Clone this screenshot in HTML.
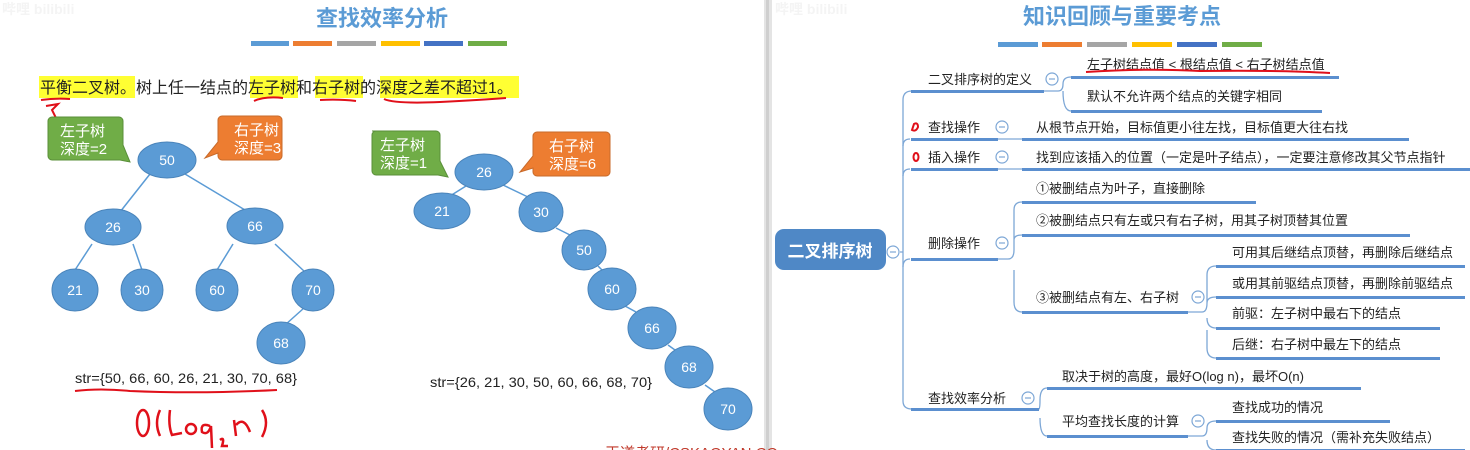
<!DOCTYPE html>
<html><head><meta charset="utf-8"><style>
html,body{margin:0;padding:0;background:#fff;width:1470px;height:450px;overflow:hidden}
svg{display:block;font-family:"Liberation Sans","Noto Sans CJK SC",sans-serif}
</style></head><body>
<svg width="1470" height="450" viewBox="0 0 1470 450" xmlns="http://www.w3.org/2000/svg">
<rect width="1470" height="450" fill="#fff"/>
<rect x="764" y="0" width="8" height="450" fill="#e4e4e4"/>
<rect x="766" y="0" width="3" height="450" fill="#cfcfcf"/>
<text x="2" y="14" font-size="14" fill="#f4f4f4" font-weight="bold">哔哩 bilibili</text>
<text x="775" y="14" font-size="14" fill="#f4f4f4" font-weight="bold">哔哩 bilibili</text>

<text x="382" y="26" font-size="22" font-weight="bold" fill="#5b9bd5" text-anchor="middle">查找效率分析</text>
<g>
<rect x="251" y="41" width="38" height="5" fill="#5b9bd5"/>
<rect x="293" y="41" width="39" height="5" fill="#ed7d31"/>
<rect x="337" y="41" width="39" height="5" fill="#a5a5a5"/>
<rect x="381" y="41" width="39" height="5" fill="#ffc000"/>
<rect x="424" y="41" width="39" height="5" fill="#4472c4"/>
<rect x="468" y="41" width="39" height="5" fill="#70ad47"/>
</g>
<rect x="39" y="76" width="96" height="22" fill="#ffff33"/>
<rect x="250" y="76" width="48" height="22" fill="#ffff33"/>
<rect x="315" y="76" width="48" height="22" fill="#ffff33"/>
<rect x="380" y="76" width="139" height="22" fill="#ffff33"/>
<text x="40" y="93" font-size="16" fill="#222">平衡二叉树。树上任一结点的左子树和右子树的深度之差不超过1。</text>
<g stroke="#e0101a" stroke-width="2" fill="none">
<path d="M41 100 Q55 98 70 99"/>
<path d="M46 106 L58 104 L52 110 L56 118"/>
<path d="M254 101 Q265 96 283 98"/>
<path d="M320 100 Q340 99 356 101"/>
<path d="M384 99 Q395 104 440 102 Q480 100 506 98"/>
<path d="M75 391 Q100 388 130 391 Q200 394 277 390"/>
</g>
<g stroke="#e0101a" stroke-width="2.5" fill="none">
<ellipse cx="143" cy="423" rx="6" ry="13"/>
<path d="M160 410 Q154 423 160 436"/>
<path d="M170 410 Q168 425 172 435 L182 433"/>
<circle cx="191" cy="429" r="5"/>
<path d="M210 426 Q200 422 202 432 Q208 436 211 426 L212 448"/>
<path d="M220 440 Q225 436 222 446 L228 446"/>
<path d="M234 420 L236 436 M236 425 Q244 416 250 432"/>
<path d="M262 410 Q270 422 262 437"/>
</g>

<g font-size="15" fill="#fff">
<path d="M52 117 h67 a4 4 0 0 1 4 4 v24 l7 17 l-10 -2 h-68 a4 4 0 0 1 -4 -4 v-35 a4 4 0 0 1 4 -4z" fill="#70ad47" stroke="#5a8f3a"/>
<text x="60" y="136">左子树</text><text x="60" y="154">深度=2</text>
<path d="M222 116 h56 a4 4 0 0 1 4 4 v36 a4 4 0 0 1 -4 4 h-56 a4 4 0 0 1 -4 -4 v-3 l-13 5 l13 -16 v-22 a4 4 0 0 1 4 -4z" fill="#ed7d31" stroke="#c86a2a"/>
<text x="234" y="135">右子树</text><text x="234" y="153">深度=3</text>
<path d="M372 131 h64 a4 4 0 0 1 4 4 v26 l8 16 l-10 -2 h-62 a4 4 0 0 1 -4 -4 v-36 a4 4 0 0 1 4 -4z" fill="#70ad47" stroke="#5a8f3a"/>
<text x="380" y="150">左子树</text><text x="380" y="168">深度=1</text>
<path d="M537 132 h69 a4 4 0 0 1 4 4 v36 a4 4 0 0 1 -4 4 h-69 a4 4 0 0 1 -4 -4 v-4 l-13 4 l13 -16 v-20 a4 4 0 0 1 4 -4z" fill="#ed7d31" stroke="#c86a2a"/>
<text x="549" y="151">右子树</text><text x="549" y="169">深度=6</text>
</g>

<g stroke="#5b9bd5" stroke-width="1.5">
<line x1="150" y1="174" x2="120" y2="212"/><line x1="185" y1="174" x2="245" y2="210"/>
<line x1="92" y1="244" x2="75" y2="270"/><line x1="133" y1="244" x2="142" y2="270"/>
<line x1="233" y1="244" x2="217" y2="270"/><line x1="275" y1="244" x2="305" y2="272"/>
<line x1="304" y1="308" x2="285" y2="325"/>
<line x1="466" y1="186" x2="450" y2="196"/><line x1="503" y1="185" x2="530" y2="198"/>
<line x1="556" y1="228" x2="572" y2="236"/><line x1="598" y1="266" x2="604" y2="272"/>
<line x1="625" y1="306" x2="636" y2="312"/><line x1="668" y1="345" x2="675" y2="350"/>
<line x1="705" y1="385" x2="715" y2="392"/>
</g>
<g fill="#5b9bd5" stroke="#4a84ba" stroke-width="1">
<ellipse cx="167" cy="160" rx="29" ry="18"/>
<ellipse cx="113" cy="227" rx="28" ry="18"/>
<ellipse cx="255" cy="226" rx="28" ry="18"/>
<ellipse cx="75" cy="290" rx="23" ry="21"/>
<ellipse cx="142" cy="290" rx="21" ry="21"/>
<ellipse cx="217" cy="290" rx="21" ry="21"/>
<ellipse cx="313" cy="290" rx="21" ry="21"/>
<ellipse cx="281" cy="343" rx="24" ry="21"/>
<ellipse cx="484" cy="172" rx="29" ry="18"/>
<ellipse cx="442" cy="211" rx="28" ry="18"/>
<ellipse cx="541" cy="212" rx="22" ry="20"/>
<ellipse cx="584" cy="250" rx="22" ry="20"/>
<ellipse cx="612" cy="289" rx="24" ry="21"/>
<ellipse cx="652" cy="328" rx="24" ry="21"/>
<ellipse cx="689" cy="367" rx="24" ry="21"/>
<ellipse cx="728" cy="409" rx="24" ry="21"/>
</g>
<g fill="#fff" font-size="14" text-anchor="middle">
<text x="167" y="165">50</text><text x="113" y="232">26</text><text x="255" y="231">66</text>
<text x="75" y="295">21</text><text x="142" y="295">30</text><text x="217" y="295">60</text>
<text x="313" y="295">70</text><text x="281" y="348">68</text>
<text x="484" y="177">26</text><text x="442" y="216">21</text><text x="541" y="217">30</text>
<text x="584" y="255">50</text><text x="612" y="294">60</text><text x="652" y="333">66</text>
<text x="689" y="372">68</text><text x="728" y="414">70</text>
</g>
<text x="75" y="383" font-size="14" fill="#222" textLength="222" lengthAdjust="spacingAndGlyphs">str={50, 66, 60, 26, 21, 30, 70, 68}</text>
<text x="430" y="387" font-size="14" fill="#222" textLength="222" lengthAdjust="spacingAndGlyphs">str={26, 21, 30, 50, 60, 66, 68, 70}</text>
<text x="605" y="458" font-size="15" fill="#c0392b">王道考研/CSKAOYAN.CO</text>

<text x="1122" y="24" font-size="22" font-weight="bold" fill="#5b9bd5" text-anchor="middle">知识回顾与重要考点</text>
<g>
<rect x="998" y="42" width="40" height="5" fill="#5b9bd5"/>
<rect x="1042" y="42" width="40" height="5" fill="#ed7d31"/>
<rect x="1087" y="42" width="40" height="5" fill="#a5a5a5"/>
<rect x="1132" y="42" width="40" height="5" fill="#ffc000"/>
<rect x="1177" y="42" width="40" height="5" fill="#4472c4"/>
<rect x="1222" y="42" width="40" height="5" fill="#70ad47"/>
</g>

<rect x="775" y="229" width="111" height="41" rx="9" fill="#4f88c6"/>
<text x="830" y="257" font-size="17" font-weight="bold" fill="#fff" text-anchor="middle">二叉排序树</text>

<g stroke="#7da7d6" stroke-width="1.3" fill="none">
<path d="M900 252 H903 M903 100 Q903 91 912 91 M903 100 V401 Q903 409 912 409"/>
<path d="M903 146 Q903 139 910 139 M903 176 Q903 169 910 169 M903 267 Q903 259 910 259"/>
<path d="M1044 91 H1058 Q1063 91 1063 84 Q1063 77 1071 77 M1063 91 Q1063 111 1071 111"/>
<path d="M998 139 H1022 M998 169 H1022"/>
<path d="M998 259 H1008 Q1014 259 1014 250 V210 Q1014 202 1022 202 M1014 240 Q1014 235 1022 235 M1014 270 V302 Q1014 312 1022 312"/>
<path d="M1188 312 H1202 Q1207 312 1207 303 V275 Q1207 266 1216 266 M1207 303 Q1207 297 1216 297 M1207 318 Q1207 328 1216 328 M1207 330 V348 Q1207 358 1216 358"/>
<path d="M1039 409 Q1040 409 1040 400 Q1040 388 1047 388 M1040 418 Q1040 436 1047 436"/>
<path d="M1188 436 H1202 Q1207 436 1207 428 Q1207 421 1216 421 M1207 440 Q1207 450 1216 450"/>
</g>
<g stroke="#7da7d6" stroke-width="1.2" fill="#fff">
<circle cx="893" cy="252" r="6"/><circle cx="1052" cy="79" r="6"/>
<circle cx="1002" cy="127" r="6"/><circle cx="1002" cy="157" r="6"/>
<circle cx="1002" cy="243" r="6"/><circle cx="1198" cy="297" r="6"/>
<circle cx="1028" cy="398" r="6"/><circle cx="1198" cy="421" r="6"/>
</g>
<g stroke="#7da7d6" stroke-width="1.2">
<line x1="890" y1="252" x2="896" y2="252"/><line x1="1049" y1="79" x2="1055" y2="79"/>
<line x1="999" y1="127" x2="1005" y2="127"/><line x1="999" y1="157" x2="1005" y2="157"/>
<line x1="999" y1="243" x2="1005" y2="243"/><line x1="1195" y1="297" x2="1201" y2="297"/>
<line x1="1025" y1="398" x2="1031" y2="398"/><line x1="1195" y1="421" x2="1201" y2="421"/>
</g>
<g fill="#5b8fcf">
<rect x="911" y="90" width="133" height="3"/>
<rect x="911" y="138" width="87" height="3"/>
<rect x="911" y="168" width="87" height="3"/>
<rect x="911" y="258" width="87" height="3"/>
<rect x="911" y="408" width="128" height="3"/>
<rect x="1071" y="76" width="268" height="3"/>
<rect x="1071" y="110" width="251" height="3"/>
<rect x="1022" y="138" width="387" height="3"/>
<rect x="1022" y="168" width="448" height="3"/>
<rect x="1022" y="201" width="234" height="3"/>
<rect x="1022" y="234" width="388" height="3"/>
<rect x="1022" y="311" width="166" height="3"/>
<rect x="1216" y="265" width="249" height="3"/>
<rect x="1216" y="296" width="249" height="3"/>
<rect x="1216" y="327" width="224" height="3"/>
<rect x="1216" y="357" width="224" height="3"/>
<rect x="1047" y="387" width="314" height="3"/>
<rect x="1047" y="435" width="141" height="3"/>
<rect x="1216" y="420" width="174" height="3"/>
<rect x="1216" y="449" width="249" height="3"/>
</g>
<g font-size="13" fill="#222">
<text x="928" y="84">二叉排序树的定义</text>
<text x="928" y="132">查找操作</text>
<text x="928" y="162">插入操作</text>
<text x="928" y="248">删除操作</text>
<text x="928" y="403">查找效率分析</text>
<text x="1087" y="69">左子树结点值 &lt; 根结点值 &lt; 右子树结点值</text>
<text x="1087" y="101">默认不允许两个结点的关键字相同</text>
<text x="1036" y="132">从根节点开始，目标值更小往左找，目标值更大往右找</text>
<text x="1036" y="162">找到应该插入的位置（一定是叶子结点），一定要注意修改其父节点指针</text>
<text x="1036" y="193">①被删结点为叶子，直接删除</text>
<text x="1036" y="225">②被删结点只有左或只有右子树，用其子树顶替其位置</text>
<text x="1036" y="302">③被删结点有左、右子树</text>
<text x="1232" y="257">可用其后继结点顶替，再删除后继结点</text>
<text x="1232" y="288">或用其前驱结点顶替，再删除前驱结点</text>
<text x="1232" y="318">前驱：左子树中最右下的结点</text>
<text x="1232" y="349">后继：右子树中最左下的结点</text>
<text x="1062" y="381">取决于树的高度，最好O(log n)，最坏O(n)</text>
<text x="1062" y="426">平均查找长度的计算</text>
<text x="1232" y="412">查找成功的情况</text>
<text x="1232" y="442">查找失败的情况（需补充失败结点）</text>
</g>
<g stroke="#e0101a" stroke-width="2" fill="none">
<path d="M1086 72 Q1150 68 1200 71 Q1280 70 1330 73"/>
<path d="M914 124 Q918 122 918 127 Q916 132 912 130 Z"/>
<ellipse cx="916" cy="157" rx="2.5" ry="4"/>
</g>
</svg>
</body></html>
